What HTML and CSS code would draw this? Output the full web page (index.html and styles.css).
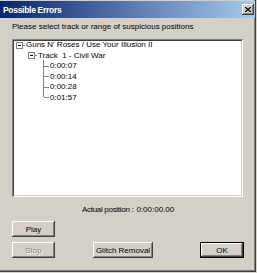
FILE: index.html
```html
<!DOCTYPE html>
<html lang="en">
<head>
  <meta charset="UTF-8">
  <title>Possible Errors</title>
  <link rel="stylesheet" href="styles.css">
</head>
<body>
  <div class="dialog">
    <div class="titlebar">
      <span class="title">Possible Errors</span>
      <span class="close-btn">
        <svg width="6" height="5" viewBox="0 0 6 5"><path d="M0 0 L6 5 M6 0 L0 5" stroke="#000" stroke-width="1.3"/></svg>
      </span>
    </div>

    <div class="content">
      <div class="prompt">Please select track or range of suspicious positions</div>

      <div class="tree">
        <div class="row level-0">
          <span class="toggle"></span>
          <span class="label">Guns N' Roses / Use Your Illusion II</span>
        </div>
        <div class="row level-1">
          <span class="toggle"></span>
          <span class="label">Track&nbsp; 1 - Civil War</span>
        </div>
        <div class="leaves">
          <div class="row leaf"><span class="stub"></span><span class="label">0:00:07</span></div>
          <div class="row leaf"><span class="stub"></span><span class="label">0:00:14</span></div>
          <div class="row leaf"><span class="stub"></span><span class="label">0:00:28</span></div>
          <div class="row leaf"><span class="stub"></span><span class="label">0:01:57</span></div>
        </div>
      </div>

      <div class="position">
        <span class="position-label">Actual position :</span>
        <span class="position-value">0:00:00.00</span>
      </div>

      <div class="btn-row">
        <button class="btn">Play</button>
      </div>
      <div class="btn-row bottom">
        <button class="btn" disabled>Stop</button>
        <button class="btn glitch">Glitch Removal</button>
        <button class="btn default">OK</button>
      </div>
    </div>
  </div>
</body>
</html>
```

FILE: styles.css
```css
* {
  box-sizing: border-box;
}

body {
  margin: 0;
  background-color: #d4d0c8;
  font-family: "Liberation Sans Narrow", "Liberation Sans", Arial, sans-serif;
  font-size: 8px;
  color: #000;
}

.dialog {
  width: 256px;
  height: 272px;
  display: flex;
  flex-direction: column;
  box-shadow: inset -1px -1px #404040, inset -2px -2px #808080;
}

/* Title bar */
.titlebar {
  height: 17px;
  margin: 1px 1px 0 0;
  padding: 0 1px 0 3px;
  display: flex;
  align-items: center;
  justify-content: space-between;
  background: linear-gradient(to right, #0a246a, #a6caf0);
}

.title {
  color: #fff;
  font-weight: bold;
  font-size: 8.5px;
  letter-spacing: -0.3px;
}

.close-btn {
  width: 12px;
  height: 11px;
  display: flex;
  align-items: center;
  justify-content: center;
  background-color: #d4d0c8;
  box-shadow: inset -1px -1px #404040, inset 1px 1px #fff, inset -2px -2px #808080;
}

.content {
  padding: 0 12px;
  display: flex;
  flex-direction: column;
}

.prompt {
  margin-top: 4px;
  line-height: 10px;
  white-space: nowrap;
}

/* Tree view */
.tree {
  margin-top: 7px;
  width: 231px;
  height: 158px;
  background-color: #fff;
  padding: 1px 0 0 4px;
  box-shadow: inset 1px 1px #808080, inset -1px -1px #fff, inset 2px 2px #404040, inset -2px -2px #d4d0c8;
}

.row {
  height: 10.5px;
  line-height: 10.5px;
  display: flex;
  align-items: center;
  white-space: nowrap;
}

.toggle {
  width: 7px;
  height: 7px;
  border: 1px solid #808080;
  background-color: #fff;
  position: relative;
  flex-shrink: 0;
}

.toggle::after {
  content: "";
  position: absolute;
  left: 1px;
  top: 2px;
  width: 3px;
  height: 1px;
  background-color: #000;
}

.toggle::before {
  content: "";
  position: absolute;
  left: 5px;
  top: 2px;
  width: 3px;
  height: 1px;
  background-color: #808080;
}

.toggle + .label {
  margin-left: 3px;
}

.level-1 {
  padding-left: 12px;
}

.leaves {
  margin-left: 27px;
  border-left: 1px solid #808080;
  height: 37px;
  margin-top: -1px;
  padding-top: 1px;
}

.stub {
  width: 5px;
  height: 1px;
  background-color: #808080;
  flex-shrink: 0;
}

.leaf .label {
  margin-left: 1px;
}

/* Position readout */
.position {
  margin-top: 8px;
  line-height: 10px;
  display: flex;
  gap: 3px;
  padding-left: 70px;
  white-space: nowrap;
}

.position-label {
  letter-spacing: -0.3px;
}

/* Buttons */
.btn-row {
  display: flex;
  margin-top: 6px;
}

.btn-row.bottom {
  margin-top: 5px;
}

.btn {
  height: 16px;
  width: 43px;
  padding: 0;
  border: none;
  font-family: inherit;
  font-size: 8px;
  color: #000;
  background-color: #d4d0c8;
  box-shadow: inset -1px -1px #404040, inset 1px 1px #fff, inset -2px -2px #808080, inset 2px 2px #d4d0c8;
}

.btn:disabled {
  color: #808080;
  text-shadow: 1px 1px #fff;
}

.glitch {
  width: 60px;
  margin-left: 38px;
}

.default {
  width: 44px;
  margin-left: auto;
  box-shadow: inset 0 0 0 1px #000, inset -2px -2px #404040, inset 2px 2px #fff, inset -3px -3px #808080;
}
```
